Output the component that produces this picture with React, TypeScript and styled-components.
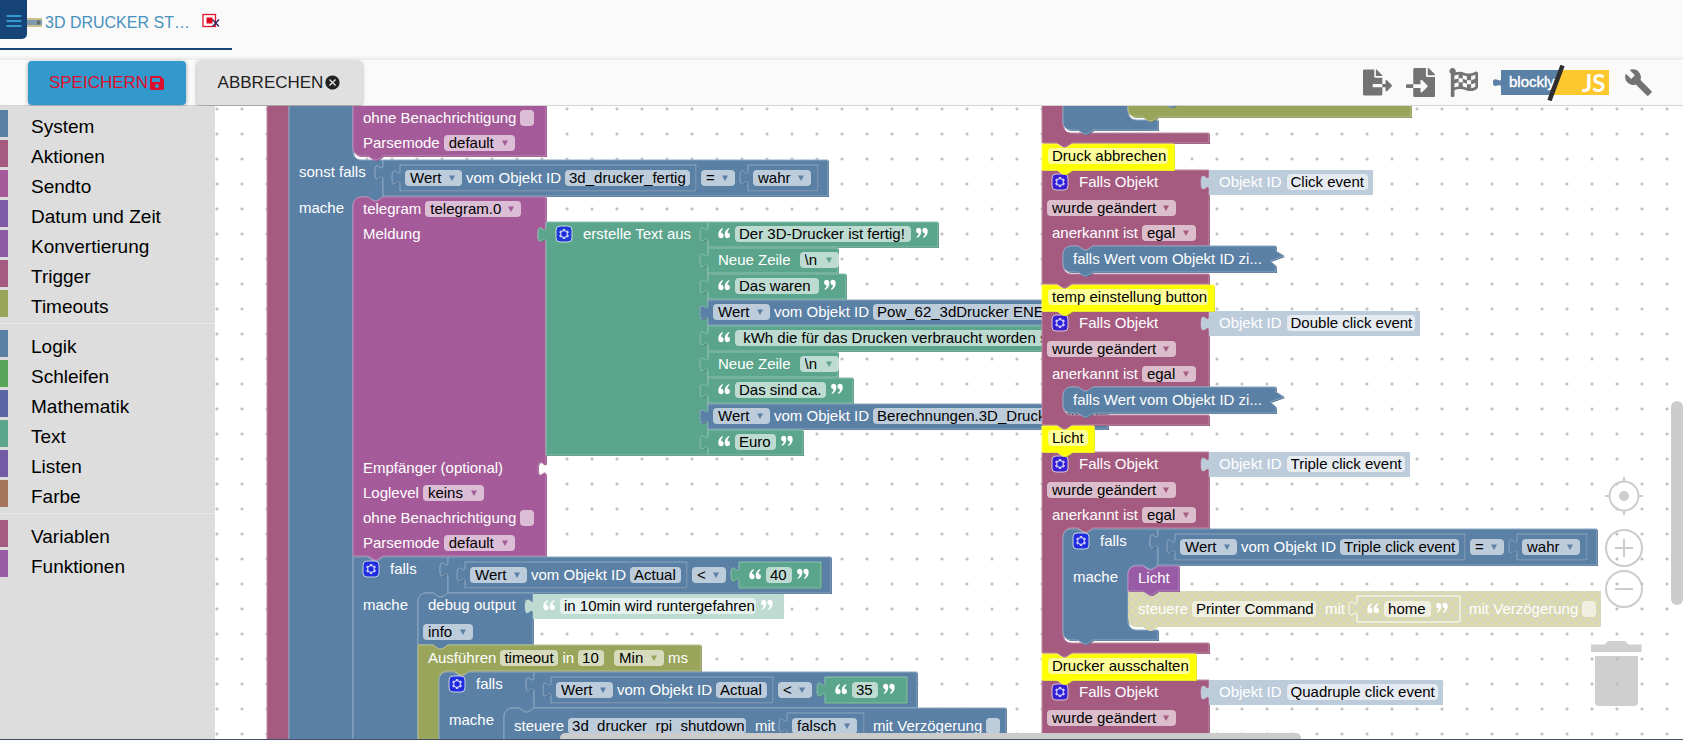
import React from "react";
import styled, { createGlobalStyle } from "styled-components";
import { FaFileExport, FaFileImport, FaFlagCheckered, FaSave } from "react-icons/fa";
import { MdBuild, MdCancel } from "react-icons/md";

const C = {
  blue: "#5b80a5",
  mauve: "#a55b80",
  magenta: "#a55b99",
  green: "#5ba58c",
  olive: "#99a55b",
  purple: "#995ba5",
  yellow: "#ffff00",
  ghostBlue: "#bdccdb",
  ghostGreen: "#bddbd1",
};

const GlobalStyle = createGlobalStyle`
  * { box-sizing: border-box; }
  html, body { margin: 0; padding: 0; }
  body { font-family: "Liberation Sans", Arial, sans-serif; background: #fff; color: #000; }
`;

/* ---------- page frame ---------- */

const Shell = styled.div`
  display: flex;
  flex-direction: column;
  height: 100vh;
  overflow: hidden;
  background: #fafafa;
`;

const TabBar = styled.header`
  display: flex;
  align-items: flex-start;
  height: 60px;
  flex: none;
  background: linear-gradient(#fafafa 55px, #ececec);
`;

const Tab = styled.div`
  display: flex;
  align-items: flex-start;
  width: 232px;
  height: 50px;
  border-bottom: 2px solid #164477;
`;

const MenuButton = styled.button`
  display: flex;
  align-items: center;
  justify-content: center;
  width: 27px;
  height: 39px;
  padding: 0;
  border: 0;
  border-radius: 0 0 5px 0;
  background: #164477;
`;

const TabLink = styled.a`
  display: flex;
  align-items: center;
  flex: 1;
  height: 46px;
  gap: 3px;
  font-size: 16px;
  line-height: 20px;
  color: #4791bd;
  text-decoration: none;
`;

const TabClose = styled.button`
  display: flex;
  margin: 13px 12px 0 0;
  padding: 0;
  border: 0;
  background: none;
`;

const Toolbar = styled.div`
  display: flex;
  align-items: center;
  height: 46px;
  flex: none;
  padding: 0 30px 0 28px;
  background: #fafafa;
  border-bottom: 1px solid #d4d4d4;
`;

const ActionButton = styled.button<{ $primary?: boolean }>`
  display: flex;
  align-items: center;
  justify-content: center;
  gap: 1px;
  height: 44px;
  width: ${(p) => (p.$primary ? 158 : 165)}px;
  margin-right: 11px;
  padding: 0;
  border: 0;
  border-radius: 4px;
  font: 17px "Liberation Sans", Arial, sans-serif;
  color: ${(p) => (p.$primary ? "#dc0f2d" : "#222")};
  background: ${(p) => (p.$primary ? "#3399cc" : "#e0e0e0")};
  box-shadow: 0 1px 4px rgba(0, 0, 0, 0.35);
`;

const ToolGroup = styled.div`
  display: flex;
  align-items: center;
  gap: 14px;
  margin-left: auto;
`;

const ToolButton = styled.button`
  display: flex;
  padding: 0;
  border: 0;
  background: none;
  color: #737373;
`;

const Main = styled.main`
  display: flex;
  flex: 1;
  min-height: 0;
  border-bottom: 1px solid #44506a;
  margin-bottom: 1px;
`;

/* ---------- toolbox ---------- */

const Toolbox = styled.nav`
  width: 215px;
  flex: none;
  padding-top: 4px;
  background: #ddd;
`;

const Category = styled.a<{ $color: string }>`
  display: block;
  height: 27px;
  margin-bottom: 3px;
  padding: 2px 0 0 23px;
  border-left: 8px solid ${(p) => p.$color};
  font-size: 19px;
  line-height: 30px;
  color: #000;
  text-decoration: none;
`;

const Separator = styled.hr`
  height: 1px;
  margin: 6px 0;
  border: 0;
  background: #e8e8e8;
`;

const categories: ([string, string] | null)[] = [
  ["System", C.blue],
  ["Aktionen", C.mauve],
  ["Sendto", C.magenta],
  ["Datum und Zeit", "#805ba5"],
  ["Konvertierung", "#8c5ba5"],
  ["Trigger", C.mauve],
  ["Timeouts", C.olive],
  null,
  ["Logik", C.blue],
  ["Schleifen", "#5ba55b"],
  ["Mathematik", "#5b67a5"],
  ["Text", C.green],
  ["Listen", "#745ba5"],
  ["Farbe", "#a5745b"],
  null,
  ["Variablen", C.mauve],
  ["Funktionen", C.purple],
];

/* ---------- workspace ---------- */

const Workspace = styled.section`
  position: relative;
  flex: 1;
  min-width: 0;
  overflow: hidden;
  background: radial-gradient(circle at 2px 3px, #c2c2c2 1px, transparent 2px) 0 0 / 25px 25px #fff;
`;

/* Block canvas, scrolled by the workspace's current view offset. */
const BlockCanvas = styled.div`
  position: absolute;
  left: -215px;
  top: -106px;
`;

const BlockBox = styled.div<{ $inline?: boolean; $x: number; $y: number; $w: number; $h: number; $ink: string }>`
  position: ${(p) => (p.$inline ? "relative" : "absolute")};
  left: ${(p) => p.$x}px;
  top: ${(p) => p.$y}px;
  width: ${(p) => p.$w}px;
  height: ${(p) => p.$h}px;
  flex: none;
  font-size: 15px;
  line-height: 16px;
  color: ${(p) => p.$ink};
`;

const Shape = styled.svg`
  position: absolute;
  left: 0;
  top: 0;
  overflow: visible;
  pointer-events: none;
`;

const Rows = styled.div<{ $top?: number }>`
  position: relative;
  padding-top: ${(p) => p.$top ?? 0}px;
`;

const Row = styled.div<{ $h?: number; $after?: number; $pad?: number; $gap?: number }>`
  display: flex;
  align-items: center;
  height: ${(p) => p.$h ?? 25}px;
  margin-bottom: ${(p) => p.$after ?? 0}px;
  padding-left: ${(p) => p.$pad ?? 10}px;
  padding-bottom: ${(p) => (p.$h ?? 25) % 2}px;
  gap: ${(p) => p.$gap ?? 4}px;
  white-space: nowrap;
`;

const TextField = styled.input<{ $w: number }>`
  width: ${(p) => p.$w}px;
  height: 16px;
  flex: none;
  padding: 0 0 0 4px;
  border: 0;
  border-radius: 4px;
  outline: 0;
  font: 15px/16px "Liberation Sans", Arial, sans-serif;
  color: #000;
  background: rgba(255, 255, 255, 0.6);
`;

const SelectWrap = styled.span<{ $w: number }>`
  position: relative;
  display: flex;
  width: ${(p) => p.$w}px;
  height: 16px;
  flex: none;
  svg {
    position: absolute;
    right: 7px;
    top: 5px;
    pointer-events: none;
  }
`;

const SelectField = styled.select`
  appearance: none;
  width: 100%;
  height: 16px;
  padding: 0 0 0 5px;
  border: 0;
  border-radius: 4px;
  outline: 0;
  font: 15px/16px "Liberation Sans", Arial, sans-serif;
  color: #000;
  background: rgba(255, 255, 255, 0.6);
`;

const Check = styled.input`
  appearance: none;
  width: 14px;
  height: 16px;
  margin: 0;
  flex: none;
  border-radius: 4px;
  background: rgba(255, 255, 255, 0.6);
`;

const CheckLabel = styled.label`
  display: flex;
  align-items: center;
  gap: 4px;
`;

const Spacer = styled.span<{ $w: number }>`
  width: ${(p) => p.$w}px;
  flex: none;
`;

/* ---------- block outlines ---------- */

type Seg = { kind: "row"; w: number; to: number; tab?: boolean } | { kind: "stmt"; x: number; to: number };

const NOTCH = "l6,4 3,0 6,-4";
const NOTCH_BACK = "l-6,4 -3,0 -6,-4";
const TAB = "v5 c0,10 -8,-8 -8,7.5 s8,-2.5 8,7.5";

const valuePath = (w: number, h: number) => `M0,0 H${w} V${h} H0 V20 c0,-10 -8,8 -8,-7.5 s8,2.5 8,-7.5 z`;

function stackPath(segs: Seg[], roundTop: boolean, roundBottom: boolean) {
  let d = roundTop ? "M0,8 a8,8 0 0,1 8,-8 H15 " : "M0,0 H15 ";
  d += NOTCH;
  for (const s of segs) {
    if (s.kind === "row") {
      d += ` H${s.w}`;
      if (s.tab) {
        d += ` ${TAB}`;
      }
      d += ` V${s.to}`;
    } else {
      d += ` H${s.x + 30} ${NOTCH_BACK} h-7 a8,8 0 0,0 -8,8 V${s.to - 8} a8,8 0 0,0 8,8`;
    }
  }
  d += ` H30 ${NOTCH_BACK}`;
  d += roundBottom ? ` H8 a8,8 0 0,1 -8,-8 z` : " H0 z";
  return d;
}

const mix = (hex: string, to: number, k: number) => {
  const n = parseInt(hex.slice(1), 16);
  const ch = [n >> 16, (n >> 8) & 255, n & 255].map((v) => Math.round(v + (to - v) * k));
  return `rgb(${ch.join(",")})`;
};

type BlockProps = {
  x?: number;
  y?: number;
  w: number;
  h: number;
  color: string;
  path?: string;
  inline?: boolean;
  ghost?: boolean;
  outline?: string;
  ink?: string;
  children?: React.ReactNode;
};

function Block({ x = 0, y = 0, w, h, color, path, inline, ghost, outline, ink = "#fff", children }: BlockProps) {
  const d = path ?? valuePath(w, h);
  const flat = color.startsWith("url") || color === "none";
  return (
    <BlockBox $inline={inline} $x={x} $y={y} $w={w} $h={h} $ink={ink}>
      <Shape width={w} height={h}>
        {!ghost && !flat && <path d={d} fill={mix(color, 0, 0.2)} transform="translate(1,1)" />}
        <path
          d={d}
          fill={color}
          stroke={ghost ? "none" : outline ?? (flat ? "none" : mix(color, 255, 0.3))}
          strokeWidth={1}
        />
      </Shape>
      {children}
    </BlockBox>
  );
}

/* ---------- fields ---------- */

function Drop({ w, value, label, color = C.blue }: { w: number; value: string; label: string; color?: string }) {
  return (
    <SelectWrap $w={w}>
      <SelectField aria-label={label} defaultValue={value}>
        <option>{value}</option>
      </SelectField>
      <svg width="6" height="6" viewBox="0 0 6 6" fill={color}>
        <path d="M0 0.5h6L3 6z" />
      </svg>
    </SelectWrap>
  );
}

const Field = ({ w, value, label }: { w: number; value: string; label: string }) => (
  <TextField $w={w} defaultValue={value} aria-label={label} />
);

const Quote = ({ close }: { close?: boolean }) => (
  <svg width="12" height="16" viewBox="0 0 12 16" fill="#fff">
    <g transform={close ? "translate(0,2)" : "translate(12,12) rotate(180)"}>
      <path d="M0 2.6A2.6 2.6 0 0 1 5.3 2.4C5.5 6 4 8.600 1 9.900L0.500 9C1.800 8.100 2.500 6.800 2.500 5.200A2.600 2.600 0 0 1 0 2.600z" />
      <path d="M6.400 2.600A2.600 2.600 0 0 1 11.700 2.400C11.900 6 10.400 8.600 7.400 9.900L6.900 9C8.200 8.100 8.900 6.800 8.900 5.200A2.600 2.600 0 0 1 6.400 2.600z" />
    </g>
  </svg>
);

const GearIcon = styled.svg`
  overflow: visible;
  flex: none;
`;

const Gear = () => (
  <GearIcon width="16" height="16" viewBox="0 0 16 16">
    <rect width="16" height="16" rx="4" fill="#00f" stroke="#fff" opacity="0.65" />
    <g opacity="0.75">
      <path
        fill="#fff"
        d="m4.203,7.296 0,1.368 -0.92,0.677 -0.11,0.41 0.9,1.559 0.41,0.11 1.043,-0.457 1.187,0.683 0.127,1.134 0.3,0.3 1.8,0 0.3,-0.299 0.127,-1.138 1.185,-0.682 1.046,0.458 0.409,-0.11 0.9,-1.559 -0.11,-0.41 -0.92,-0.677 0,-1.366 0.92,-0.677 0.11,-0.41 -0.9,-1.559 -0.409,-0.109 -1.046,0.458 -1.185,-0.682 -0.127,-1.138 -0.3,-0.299 -1.8,0 -0.3,0.3 -0.126,1.135 -1.187,0.682 -1.043,-0.457 -0.41,0.11 -0.899,1.559 0.108,0.409z"
      />
      <circle cx="8" cy="8" r="2.7" fill="#1a24e0" />
    </g>
  </GearIcon>
);

/* ---------- reusable block bodies ---------- */

const StateValueRow = ({ id, w, h = 26 }: { id: string; w: number; h?: number }) => (
  <Row $pad={5} $h={h}>
    <Drop w={57} value="Wert" label="Attribut" />
    <span>vom Objekt ID</span>
    <Field w={w} value={id} label="Objekt ID" />
  </Row>
);

const QuotedRow = ({ text, w, h = 26 }: { text: string; w: number; h?: number }) => (
  <Row $gap={5} $h={h}>
    <Quote />
    <Field w={w} value={text} label="Text" />
    <Quote close />
  </Row>
);

type CompareProps = { x: number; y: number; w: number; id: string; idW: number; op: string; text?: string };

function Compare({ x, y, w, id, idW, op, text }: CompareProps) {
  return (
    <Block x={x} y={y} w={w} h={36} color={C.blue}>
      <Rows>
        <Row $h={36} $pad={17} $gap={5}>
          <Block inline w={idW + 171} h={26} color={C.blue}>
            <Rows>
              <StateValueRow id={id} w={idW} />
            </Rows>
          </Block>
          <Drop w={34} value={op} label="Vergleich" />
          <Spacer $w={3} />
          {text ? (
            <Block inline w={82} h={26} color={C.green}>
              <Rows>
                <QuotedRow text={text} w={26} />
              </Rows>
            </Block>
          ) : (
            <Block inline w={70} h={26} color={C.blue}>
              <Rows>
                <Row $pad={5} $h={26}>
                  <Drop w={58} value="wahr" label="Wahrheitswert" />
                </Row>
              </Rows>
            </Block>
          )}
        </Row>
      </Rows>
    </Block>
  );
}

const IfLabels = () => (
  <Rows>
    <Row $gap={11} $after={11}>
      <Gear />
      <span>falls</span>
    </Row>
    <Row>mache</Row>
  </Rows>
);

const TelegramTail = () => (
  <>
    <Row>
      <CheckLabel>
        ohne Benachrichtigung
        <Check type="checkbox" />
      </CheckLabel>
    </Row>
    <Row>
      <span>Parsemode</span>
      <Drop w={71} value="default" label="Parsemode" color={C.magenta} />
    </Row>
  </>
);

const textItems: { kind: "text" | "newline" | "state"; text: string; field: number; w: number }[] = [
  { kind: "text", text: "Der 3D-Drucker ist fertig!", field: 176, w: 230 },
  { kind: "newline", text: "\\n", field: 39, w: 130 },
  { kind: "text", text: "Das waren ", field: 84, w: 138 },
  { kind: "state", text: "Pow_62_3dDrucker ENERGY", field: 240, w: 414 },
  { kind: "text", text: " kWh die für das Drucken verbraucht worden sind.", field: 360, w: 415 },
  { kind: "newline", text: "\\n", field: 39, w: 130 },
  { kind: "text", text: "Das sind ca.", field: 91, w: 145 },
  { kind: "state", text: "Berechnungen.3D_Drucker_letzte", field: 228, w: 400 },
  { kind: "text", text: "Euro", field: 41, w: 95 },
];

function TextItem({ item, y }: { item: (typeof textItems)[number]; y: number }) {
  return (
    <Block x={708} y={y} w={item.w} h={25} color={item.kind === "state" ? C.blue : C.green}>
      <Rows>
        {item.kind === "text" && <QuotedRow text={item.text} w={item.field} h={25} />}
        {item.kind === "state" && <StateValueRow id={item.text} w={item.field} h={25} />}
        {item.kind === "newline" && (
          <Row>
            <span>Neue Zeile</span>
            <Spacer $w={1} />
            <Drop w={item.field} value={item.text} label="Zeilenumbruch" color={C.green} />
          </Row>
        )}
      </Rows>
    </Block>
  );
}

const Comment = ({ y, w, text }: { y: number; w: number; text: string }) => (
  <Block x={1042} y={y} w={w} h={26} color={C.yellow} path={stackPath([{ kind: "row", w, to: 26 }], false, false)}>
    <Rows>
      <Row $pad={6}>
        <Field w={w - 12} value={text} label="Kommentar" />
      </Row>
    </Rows>
  </Block>
);

type TriggerProps = { y: number; h: number; event: string; eventW: number; short?: boolean };

function Trigger({ y, h, event, eventW, short }: TriggerProps) {
  const shape = stackPath(
    [
      { kind: "row", w: 167, to: 76, tab: true },
      { kind: "stmt", x: 21, to: h - 10 },
      { kind: "row", w: 167, to: h },
    ],
    false,
    false
  );
  return (
    <>
      <Block x={1042} y={y} w={167} h={h} color={C.mauve} path={shape}>
        <Rows>
          <Row $gap={11}>
            <Gear />
            <span>Falls Objekt</span>
          </Row>
          <Row $pad={5} $h={26}>
            <Drop w={129} value="wurde geändert" label="Bedingung" color={C.mauve} />
          </Row>
          {!short && (
            <Row>
              <span>anerkannt ist</span>
              <Drop w={54} value="egal" label="anerkannt ist" color={C.mauve} />
            </Row>
          )}
        </Rows>
      </Block>
      <Block ghost x={1209} y={y} w={eventW + 83} h={25} color={C.ghostBlue}>
        <Rows>
          <Row $gap={5}>
            <span>Objekt ID</span>
            <Field w={eventW} value={event} label="Ereignis" />
          </Row>
        </Rows>
      </Block>
    </>
  );
}

const Collapsed = ({ y }: { y: number }) => (
  <Block
    x={1063}
    y={y}
    w={213}
    h={26}
    color={C.blue}
    path={`M0,8 a8,8 0 0,1 8,-8 H15 ${NOTCH} H213 v5 l8,5 -14,5 6,5 v6 H30 ${NOTCH_BACK} H8 a8,8 0 0,1 -8,-8 z`}
  >
    <Rows>
      <Row $h={26}>falls Wert vom Objekt ID zi...</Row>
    </Rows>
  </Block>
);

/* ---------- workspace overlays ---------- */

const ScrollX = styled.div`
  position: absolute;
  left: 23.5%;
  bottom: 0;
  width: 50.5%;
  height: 6px;
  border-radius: 5px 5px 0 0;
  background: #ccc;
`;

const ScrollY = styled.div`
  position: absolute;
  right: 0;
  top: 295px;
  width: 12px;
  height: 204px;
  border-radius: 6px;
  background: #ccc;
`;

const Controls = styled.div`
  position: absolute;
  right: 39px;
  bottom: 33px;
  display: flex;
  flex-direction: column;
  align-items: flex-end;
`;

const ControlButton = styled.button<{ $after?: number }>`
  display: flex;
  margin: 0 0 ${(p) => p.$after ?? 0}px;
  padding: 0;
  border: 0;
  background: none;
`;

const Hatch = () => (
  <svg width="0" height="0">
    <defs>
      <pattern id="disabled" width="8" height="8" patternUnits="userSpaceOnUse">
        <rect width="8" height="8" fill="#d3d3be" fillOpacity="0.95" />
        <path d="M-1 -1L9 9M9 -1L-1 9" stroke="#dcdca4" strokeWidth="1.5" />
      </pattern>
    </defs>
  </svg>
);

export default function App() {
  return (
    <Shell>
      <GlobalStyle />
      <TabBar>
        <Tab>
          <MenuButton aria-label="Menü">
            <svg width="16" height="14" viewBox="0 0 16 14" stroke="#3399cc" strokeWidth="2">
              <path d="M0.5 3H15.5M0.5 8H15.5M0.5 13H15.5" />
            </svg>
          </MenuButton>
          <TabLink href="#script">
            <svg width="15" height="10" viewBox="0 0 15 10">
              <rect width="15" height="9" fill="#c9c08c" />
              <rect width="15" height="5" y="2" fill="#7f99ad" />
              <path d="M10 2.500h3v4h-3z" fill="#5f6d62" />
            </svg>
            3D DRUCKER ST…
          </TabLink>
          <TabClose aria-label="Tab schließen">
            <svg width="18" height="16" viewBox="0 0 18 16">
              <rect x="1" y="1.5" width="12.5" height="12" fill="#fff" stroke="#e3122d" strokeWidth="1.3" />
              <rect x="4.5" y="4.5" width="6" height="6" fill="#e3001b" />
              <path d="M10.5 6.500L17 13.500M17 6.500L10.500 13.500" stroke="#2b2560" strokeWidth="1.3" />
            </svg>
          </TabClose>
        </Tab>
      </TabBar>
      <Toolbar>
        <ActionButton $primary>
          SPEICHERN
          <FaSave size={16} />
        </ActionButton>
        <ActionButton>
          ABBRECHEN
          <MdCancel size={17} />
        </ActionButton>
        <ToolGroup>
          <ToolButton aria-label="Exportieren">
            <FaFileExport size={29} />
          </ToolButton>
          <ToolButton aria-label="Importieren">
            <FaFileImport size={29} />
          </ToolButton>
          <ToolButton aria-label="Blöcke prüfen">
            <FaFlagCheckered size={29} />
          </ToolButton>
          <ToolButton aria-label="Blockly oder JavaScript">
            <svg width="118" height="36" viewBox="0 0 118 36">
              <path d="M9 5h59L58 30H9V22c0-5-8 3-8-4.500S9 19 9 14z" fill={C.blue} />
              <path d="M69 5h48v25H58z" fill="#fdc72e" />
              <text x="17" y="22" fontSize="15" fontFamily="Liberation Sans" fill="#fff" stroke="#fff" strokeWidth="0.4">
                blockly
              </text>
              <path d="M70.5 0.500L57.500 35.500" stroke="#2e2e2e" strokeWidth="4.5" />
              <text x="90" y="27" fontSize="24" fontWeight="700" fontFamily="Lato" fill="#fff">
                JS
              </text>
            </svg>
          </ToolButton>
          <ToolButton aria-label="Einstellungen">
            <MdBuild size={29} />
          </ToolButton>
        </ToolGroup>
      </Toolbar>
      <Main>
        <Toolbox>
          {categories.map((c, i) =>
            c ? (
              <Category key={c[0]} href={`#${c[0]}`} $color={c[1]}>
                {c[0]}
              </Category>
            ) : (
              <Separator key={i} />
            )
          )}
        </Toolbox>
        <Workspace>
          <Hatch />
          <BlockCanvas>
            {/* first trigger with the telegram script */}
            <Block
              x={267}
              y={60}
              w={188}
              h={720}
              color={C.mauve}
              path={stackPath(
                [
                  { kind: "row", w: 100, to: 20 },
                  { kind: "stmt", x: 22, to: 705 },
                  { kind: "row", w: 100, to: 720 },
                ],
                false,
                false
              )}
            />
            <Block
              x={289}
              y={70}
              w={94}
              h={700}
              color={C.blue}
              path={stackPath(
                [
                  { kind: "row", w: 94, to: 10 },
                  { kind: "stmt", x: 64, to: 90 },
                  { kind: "row", w: 94, to: 127, tab: true },
                  { kind: "stmt", x: 64, to: 690 },
                  { kind: "row", w: 94, to: 700 },
                ],
                true,
                false
              )}
            >
              <Rows $top={90}>
                <Row $after={11}>sonst falls</Row>
                <Row>mache</Row>
              </Rows>
            </Block>
            <Block
              x={353}
              y={86}
              w={193}
              h={70}
              color={C.magenta}
              path={stackPath([{ kind: "row", w: 193, to: 70 }], false, true)}
            >
              <Rows $top={20}>
                <TelegramTail />
              </Rows>
            </Block>
            <Compare x={383} y={160} w={445} id="3d_drucker_fertig" idW={125} op="=" />
            <Block
              x={353}
              y={197}
              w={193}
              h={359}
              color={C.magenta}
              path={stackPath(
                [
                  { kind: "row", w: 193, to: 25 },
                  { kind: "row", w: 193, to: 259, tab: true },
                  { kind: "row", w: 193, to: 359, tab: true },
                ],
                true,
                false
              )}
            >
              <Rows>
                <Row>
                  <span>telegram</span>
                  <Drop w={96} value="telegram.0" label="telegram" color={C.magenta} />
                </Row>
                <Row $after={209}>Meldung</Row>
                <Row>Empfänger (optional)</Row>
                <Row>
                  <span>Loglevel</span>
                  <Drop w={61} value="keins" label="Loglevel" color={C.magenta} />
                </Row>
                <TelegramTail />
              </Rows>
            </Block>
            <Block x={546} y={222} w={162} h={233} color={C.green}>
              <Rows>
                <Row $gap={11}>
                  <Gear />
                  <span>erstelle Text aus</span>
                </Row>
              </Rows>
            </Block>
            {textItems.map((item, i) => (
              <TextItem key={i} item={item} y={222 + i * 26} />
            ))}

            {/* condition: temperature below 40 */}
            <Block
              x={353}
              y={557}
              w={95}
              h={230}
              color={C.blue}
              path={stackPath(
                [
                  { kind: "row", w: 95, to: 36, tab: true },
                  { kind: "stmt", x: 65, to: 220 },
                  { kind: "row", w: 95, to: 230 },
                ],
                false,
                false
              )}
            >
              <IfLabels />
            </Block>
            <Compare x={448} y={557} w={383} id="Actual" idW={51} op="<" text="40" />
            <Block
              x={418}
              y={593}
              w={115}
              h={52}
              color={C.blue}
              path={stackPath([{ kind: "row", w: 115, to: 52, tab: true }], true, false)}
            >
              <Rows>
                <Row $after={1}>debug output</Row>
                <Row $h={26} $pad={5}>
                  <Drop w={50} value="info" label="Loglevel" />
                </Row>
              </Rows>
            </Block>
            <Block ghost x={533} y={594} w={251} h={25} color={C.ghostGreen}>
              <Rows>
                <QuotedRow text="in 10min wird runtergefahren" w={196} h={25} />
              </Rows>
            </Block>
            <Block
              x={418}
              y={645}
              w={283}
              h={140}
              color={C.olive}
              path={stackPath(
                [
                  { kind: "row", w: 283, to: 26 },
                  { kind: "stmt", x: 21, to: 130 },
                  { kind: "row", w: 283, to: 140 },
                ],
                false,
                false
              )}
            >
              <Rows>
                <Row $h={26}>
                  <span>Ausführen</span>
                  <Field w={58} value="timeout" label="Name" />
                  <span>in</span>
                  <Field w={26} value="10" label="Dauer" />
                  <Spacer $w={2} />
                  <Drop w={50} value="Min" label="Einheit" color={C.olive} />
                  <span>ms</span>
                </Row>
              </Rows>
            </Block>
            <Block
              x={439}
              y={672}
              w={95}
              h={110}
              color={C.blue}
              path={stackPath(
                [
                  { kind: "row", w: 95, to: 36, tab: true },
                  { kind: "stmt", x: 65, to: 100 },
                  { kind: "row", w: 95, to: 110 },
                ],
                true,
                false
              )}
            >
              <IfLabels />
            </Block>
            <Compare x={534} y={672} w={383} id="Actual" idW={51} op="<" text="35" />
            <Block
              x={504}
              y={708}
              w={502}
              h={36}
              color={C.blue}
              path={stackPath([{ kind: "row", w: 502, to: 36 }], true, false)}
            >
              <Rows>
                <Row $h={36}>
                  <span>steuere</span>
                  <Field w={178} value="3d_drucker_rpi_shutdown" label="Objekt ID" />
                  <Spacer $w={1} />
                  <span>mit</span>
                  <Spacer $w={4} />
                  <Block inline w={77} h={26} color={C.blue}>
                    <Rows>
                      <Row $pad={5} $h={26}>
                        <Drop w={65} value="falsch" label="Wahrheitswert" />
                      </Row>
                    </Rows>
                  </Block>
                  <CheckLabel>
                    <Spacer $w={1} />
                    mit Verzögerung
                    <Check type="checkbox" />
                  </CheckLabel>
                </Row>
              </Rows>
            </Block>

            {/* second column: click events */}
            <Block
              x={1042}
              y={60}
              w={167}
              h={83}
              color={C.mauve}
              path={stackPath(
                [
                  { kind: "row", w: 167, to: 10 },
                  { kind: "stmt", x: 21, to: 73 },
                  { kind: "row", w: 167, to: 83 },
                ],
                false,
                false
              )}
            />
            <Block
              x={1063}
              y={70}
              w={95}
              h={60}
              color={C.blue}
              path={stackPath(
                [
                  { kind: "row", w: 95, to: 10 },
                  { kind: "stmt", x: 65, to: 50 },
                  { kind: "row", w: 95, to: 60 },
                ],
                true,
                true
              )}
            />
            <Block
              x={1128}
              y={80}
              w={283}
              h={37}
              color={C.olive}
              path={stackPath([{ kind: "row", w: 283, to: 37 }], true, true)}
            />
            <Block
              x={1149}
              y={80}
              w={95}
              h={23}
              color={C.blue}
              path={stackPath([{ kind: "row", w: 95, to: 23 }], true, true)}
            />
            <Trigger y={170} h={114} event="Click event" eventW={81} />
            <Comment y={144} w={132} text="Druck abbrechen" />
            <Collapsed y={246} />
            <Trigger y={311} h={114} event="Double click event" eventW={128} />
            <Comment y={285} w={172} text="temp einstellung button" />
            <Collapsed y={387} />
            <Trigger y={452} h={201} event="Triple click event" eventW={118} />
            <Comment y={426} w={52} text="Licht" />
            <Block
              x={1063}
              y={529}
              w={95}
              h={111}
              color={C.blue}
              path={stackPath(
                [
                  { kind: "row", w: 95, to: 36, tab: true },
                  { kind: "stmt", x: 65, to: 101 },
                  { kind: "row", w: 95, to: 111 },
                ],
                true,
                true
              )}
            >
              <IfLabels />
            </Block>
            <Compare x={1158} y={529} w={439} id="Triple click event" idW={119} op="=" />
            <Block
              x={1128}
              y={591}
              w={473}
              h={36}
              color="url(#disabled)"
              path={stackPath([{ kind: "row", w: 473, to: 36 }], false, true)}
            >
              <Rows>
                <Row $h={36}>
                  <span>steuere</span>
                  <Field w={124} value="Printer Command" label="Objekt ID" />
                  <Spacer $w={1} />
                  <span>mit</span>
                  <Spacer $w={4} />
                  <Block inline w={103} h={26} color="none" outline="#fff">
                    <Rows>
                      <QuotedRow text="home" w={47} />
                    </Rows>
                  </Block>
                  <CheckLabel>
                    <Spacer $w={1} />
                    mit Verzögerung
                    <Check type="checkbox" />
                  </CheckLabel>
                </Row>
              </Rows>
            </Block>
            <Block
              x={1128}
              y={566}
              w={51}
              h={25}
              color={C.purple}
              path={stackPath([{ kind: "row", w: 51, to: 25 }], true, false)}
            >
              <Rows>
                <Row>Licht</Row>
              </Rows>
            </Block>
            <Trigger y={680} h={200} event="Quadruple click event" eventW={151} short />
            <Comment y={654} w={154} text="Drucker ausschalten" />
          </BlockCanvas>
          <Controls>
            <ControlButton aria-label="Zentrieren" $after={14}>
              <svg width="40" height="38" viewBox="0 0 40 38" fill="none" stroke="#ccc" strokeWidth="2">
                <circle cx="20" cy="19" r="14.5" />
                <path d="M20 0v5M20 33v5M1 19h5M34 19h5" />
                <circle cx="20" cy="19" r="5" fill="#ccc" stroke="none" />
              </svg>
            </ControlButton>
            <ControlButton aria-label="Vergrößern" $after={3}>
              <svg width="40" height="38" viewBox="0 0 40 38" fill="none" stroke="#ccc" strokeWidth="2">
                <circle cx="20" cy="19" r="18" />
                <path d="M20 10v18M11 19h18" />
              </svg>
            </ControlButton>
            <ControlButton aria-label="Verkleinern" $after={32}>
              <svg width="40" height="38" viewBox="0 0 40 38" fill="none" stroke="#ccc" strokeWidth="2">
                <circle cx="20" cy="19" r="18" />
                <path d="M11 19h18" />
              </svg>
            </ControlButton>
            <ControlButton aria-label="Papierkorb">
              <svg width="55" height="66" viewBox="0 0 55 66" fill="#bbb" fillOpacity="0.7">
                <path d="M2 4.500h13.500l3.500-3.500h17l3.500 3.500H52.500V12H2z" />
                <path d="M6 16h43v46a4 4 0 0 1-4 4H10a4 4 0 0 1-4-4z" />
              </svg>
            </ControlButton>
          </Controls>
          <ScrollX />
          <ScrollY />
        </Workspace>
      </Main>
    </Shell>
  );
}
